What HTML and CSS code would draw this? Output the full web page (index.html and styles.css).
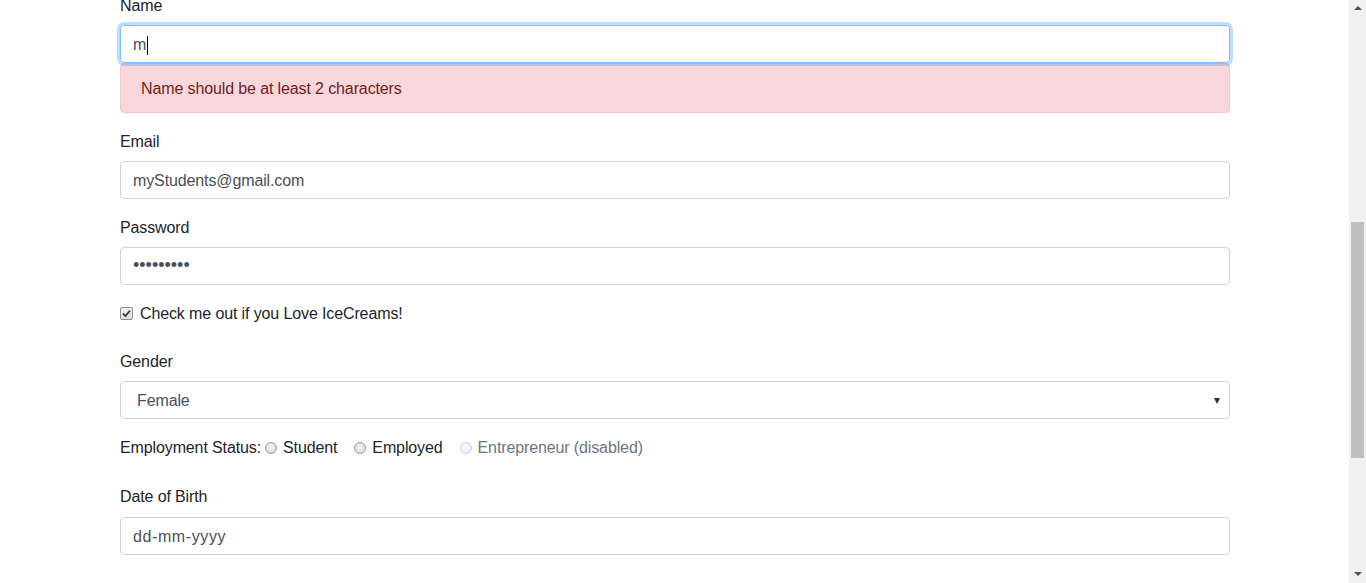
FILE: index.html
```html
<!DOCTYPE html>
<html lang="en">
<head>
<meta charset="utf-8">
<title>Form</title>
<link rel="stylesheet" href="styles.css">
</head>
<body>
<div class="page">
  <main class="viewport">
    <form class="container">
      <div class="form-group">
        <label class="label">Name</label>
        <div class="form-control focused"><span>m</span><span class="caret"></span></div>
        <div class="alert">Name should be at least 2 characters</div>
      </div>
      <div class="form-group">
        <label class="label">Email</label>
        <div class="form-control">myStudents@gmail.com</div>
      </div>
      <div class="form-group">
        <label class="label">Password</label>
        <div class="form-control dots">•••••••••</div>
      </div>
      <div class="form-group check-group">
        <span class="checkbox"><svg width="9" height="9" viewBox="0 0 9 9"><path d="M1 4.6 L3.4 7 L8 1.6" fill="none" stroke="#3a3a3a" stroke-width="1.8"/></svg></span>
        <span class="check-label">Check me out if you Love IceCreams!</span>
      </div>
      <div class="form-group">
        <label class="label">Gender</label>
        <div class="form-control select"><span class="select-text">Female</span><span class="arrow"></span></div>
      </div>
      <div class="form-group radio-row">
        <span class="radio-title">Employment Status:</span>
        <span class="radio-item"><span class="radio"></span>Student</span>
        <span class="radio-item"><span class="radio"></span>Employed</span>
        <span class="radio-item disabled"><span class="radio"></span>Entrepreneur (disabled)</span>
      </div>
      <div class="form-group dob">
        <label class="label">Date of Birth</label>
        <div class="form-control date">dd-mm-yyyy</div>
      </div>
    </form>
  </main>
  <aside class="scrollbar">
    <span class="arrow-up"></span>
    <span class="thumb"></span>
    <span class="arrow-down"></span>
  </aside>
</div>
</body>
</html>
```
FILE: styles.css
```css
* { box-sizing: border-box; }
html, body { margin: 0; padding: 0; }
body {
  font-family: "Liberation Sans", Arial, sans-serif;
  font-size: 16px;
  line-height: 24px;
  letter-spacing: -0.12px;
  color: #212529;
  background: #fff;
  overflow: hidden;
}
.page {
  display: flex;
  height: 583px;
}
.viewport {
  flex: 1;
  overflow: hidden;
}
.container {
  width: 1110px;
  margin: -7px 0 0 120px;
}
.form-group { margin-bottom: 16px; }
.label {
  display: block;
  padding-top: 1px;
  height: 24px;
  margin-bottom: 8px;
}
.dob .label { margin-bottom: 9px; }
.form-control {
  height: 38px;
  border: 1px solid #ced4da;
  border-radius: 4px;
  padding: 7px 12px 5px;
  color: #495057;
  display: flex;
  align-items: center;
}
.form-control.focused {
  border-color: #80bdff;
  box-shadow: 0 0 0 3px rgba(0, 123, 255, 0.25);
  position: relative;
  z-index: 1;
}
.caret {
  display: inline-block;
  width: 1px;
  height: 19px;
  background: #000;
  margin-left: 1px;
}
.alert {
  background: #f8d7da;
  border: 1px solid #f5c6cb;
  color: #721c24;
  border-radius: 4px;
  padding: 13px 20px 11px;
  height: 50px;
}
.dots { font-size: 18px; letter-spacing: 0; padding-top: 5px; padding-bottom: 7px; }
.check-group {
  display: flex;
  align-items: center;
  height: 24px;
  margin-bottom: 24px;
  padding-top: 1px;
}
.checkbox {
  width: 13px;
  height: 13px;
  border: 1px solid #8f8f8f;
  border-radius: 2px;
  background: linear-gradient(#f2f2f2, #dcdcdc);
  margin: 0 7px 0 0;
  display: flex;
  align-items: center;
  justify-content: center;
}
.select {
  justify-content: space-between;
  padding-left: 16px;
  padding-right: 9px;
}
.select-text { color: #495057; }
.arrow {
  width: 0;
  height: 0;
  border-left: 3.5px solid transparent;
  border-right: 3.5px solid transparent;
  border-top: 6px solid #333;
}
.radio-row {
  display: flex;
  align-items: center;
  height: 24px;
  margin-bottom: 25px;
  padding-top: 1px;
}
.radio-title { margin-right: 4px; }
.radio-item {
  display: flex;
  align-items: center;
  margin-right: 17px;
}
.radio {
  width: 12px;
  height: 12px;
  border-radius: 50%;
  border: 1px solid #9a9a9a;
  background: radial-gradient(circle at 50% 40%, #f4f4f4, #d4d4d4);
  margin-right: 6px;
}
.radio-item.disabled { color: #6c757d; }
.radio-item.disabled .radio {
  border-color: #d0d0d0;
  background: radial-gradient(circle at 50% 40%, #fafafa, #ececec);
}
.date { letter-spacing: 0.6px; }
.scrollbar {
  width: 17px;
  background: #f0f0f0;
  display: flex;
  flex-direction: column;
  align-items: center;
}
.arrow-up {
  margin-top: 6px;
  width: 0; height: 0;
  border-left: 4px solid transparent;
  border-right: 4px solid transparent;
  border-bottom: 4px solid #505050;
}
.thumb {
  margin-top: 212px;
  width: 13px;
  height: 236px;
  background: #c0c0c0;
}
.arrow-down {
  margin-top: auto;
  margin-bottom: 7px;
  width: 0; height: 0;
  border-left: 4px solid transparent;
  border-right: 4px solid transparent;
  border-top: 4px solid #505050;
}
```
